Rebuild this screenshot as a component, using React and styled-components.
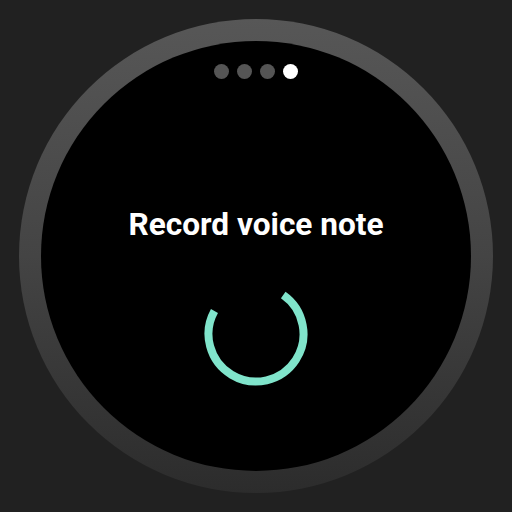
import React from "react";
import styled, { createGlobalStyle } from "styled-components";

const Global = createGlobalStyle`
  html, body { margin: 0; padding: 0; background: #212121; }
  body { font-family: Roboto, "Noto Sans", sans-serif; }
`;

const Page = styled.div`
  width: 512px;
  height: 512px;
  background: #212121;
  display: flex;
  align-items: center;
  justify-content: center;
`;

const Bezel = styled.div`
  width: 474px;
  height: 474px;
  border-radius: 50%;
  background: linear-gradient(180deg, #575757 0%, #444 50%, #2c2c2c 100%);
  display: flex;
  align-items: center;
  justify-content: center;
`;

const Screen = styled.div`
  width: 430px;
  height: 430px;
  border-radius: 50%;
  background: #000;
  display: flex;
  flex-direction: column;
  align-items: center;
  box-sizing: border-box;
  padding-top: 23px;
`;

const Dots = styled.div`
  display: flex;
  gap: 8px;
`;

const Dot = styled.span`
  width: 15px;
  height: 15px;
  border-radius: 50%;
  background: ${(p) => (p.$active ? "#ffffff" : "#555555")};
`;

const Title = styled.div`
  margin-top: 128px;
  color: #fff;
  font-family: Roboto, sans-serif;
  font-weight: 700;
  font-size: 31.6px;
  line-height: 36px;
  letter-spacing: 0;
`;

const Spinner = styled.svg`
  margin-top: 39px;
  width: 104px;
  height: 104px;
  display: block;
`;

export default function App() {
  return (
    <>
      <Global />
      <Page>
        <Bezel>
          <Screen>
            <Dots>
              <Dot />
              <Dot />
              <Dot />
              <Dot $active />
            </Dots>
            <Title>Record voice note</Title>
            <Spinner viewBox="0 0 104 104">
              <path
                d="M79.24 13.09 A47.5 47.5 0 1 1 10.46 28.97"
                fill="none"
                stroke="#80e4cb"
                strokeWidth="8"
              />
            </Spinner>
          </Screen>
        </Bezel>
      </Page>
    </>
  );
}
